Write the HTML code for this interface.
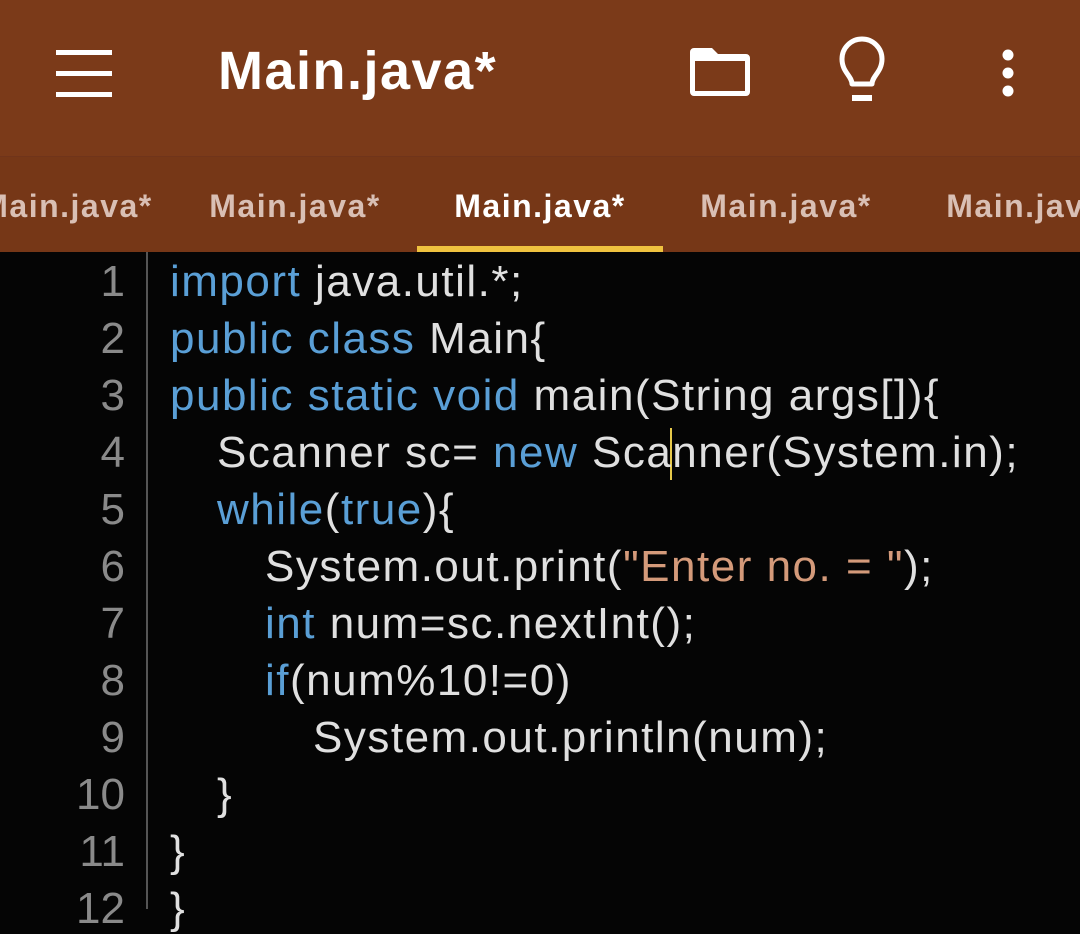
<!DOCTYPE html>
<html><head><meta charset="utf-8"><style>
html,body{margin:0;padding:0;width:1080px;height:909px;overflow:hidden;background:#050505;font-family:"Liberation Sans",sans-serif}
#hdr{position:absolute;left:0;top:0;width:1080px;height:156px;background:#7b3a19}
#tabs{position:absolute;left:0;top:156px;width:1080px;height:95px;background:#763717;border-top:1px solid #70341a}
.title{position:absolute;left:218px;top:40px;font-size:54px;color:#fff;font-weight:bold;letter-spacing:1.5px}
.tab{position:absolute;top:188px;width:246px;text-align:center;font-size:32px;color:#d9bfb4;font-weight:bold;letter-spacing:1.5px;white-space:nowrap}
.code{position:absolute;font-size:44px;color:#e0e0e0;letter-spacing:1.5px;white-space:pre}
.ln{position:absolute;right:955px;font-size:44px;color:#8a8a8a;text-align:right}
.k{color:#5a9fd6}.s{color:#d49a7a}
</style></head><body>
<div id="hdr"></div>
<div id="tabs"></div>
<svg style="position:absolute;left:0;top:0" width="1080" height="156">
<g fill="#fff"><rect x="56" y="50" width="56" height="5"/><rect x="56" y="71" width="56" height="5"/><rect x="56" y="92" width="56" height="5"/></g>
<path d="M690 52a4 4 0 0 1 4-4h18l6 6h28a4 4 0 0 1 4 4v34a4 4 0 0 1-4 4h-52a4 4 0 0 1-4-4z" fill="#fff"/>
<rect x="695" y="61" width="50" height="30" fill="#7b3a19"/>
<path d="M852 84c0-8-10-12-10-25a20 20 0 0 1 40 0c0 13-10 17-10 25z" fill="none" stroke="#fff" stroke-width="5" stroke-linejoin="round"/>
<rect x="852" y="95" width="20" height="6" fill="#fff"/>
<g fill="#fff"><circle cx="1008" cy="55" r="5.5"/><circle cx="1008" cy="73" r="5.5"/><circle cx="1008" cy="91" r="5.5"/></g>
</svg>
<div class="title">Main.java*</div>
<div class="tab" style="left:-56px">Main.java*</div>
<div class="tab" style="left:172px">Main.java*</div>
<div class="tab" style="left:417px;color:#fff">Main.java*</div>
<div class="tab" style="left:663px">Main.java*</div>
<div class="tab" style="left:909px">Main.java*</div>
<div style="position:absolute;left:417px;top:246px;width:246px;height:6px;background:#efc23f"></div>
<div style="position:absolute;left:146px;top:252px;width:2px;height:657px;background:#555"></div>
<div style="position:absolute;left:670px;top:428px;width:2px;height:52px;background:#e6c84a"></div>
<div class="ln" style="top:257px">1</div>
<div class="ln" style="top:314px">2</div>
<div class="ln" style="top:371px">3</div>
<div class="ln" style="top:428px">4</div>
<div class="ln" style="top:485px">5</div>
<div class="ln" style="top:542px">6</div>
<div class="ln" style="top:599px">7</div>
<div class="ln" style="top:656px">8</div>
<div class="ln" style="top:713px">9</div>
<div class="ln" style="top:770px">10</div>
<div class="ln" style="top:827px">11</div>
<div class="ln" style="top:884px">12</div>
<div class="code" style="left:170px;top:257px"><span class="k">import</span> java.util.*;</div>
<div class="code" style="left:170px;top:314px"><span class="k">public class</span> Main{</div>
<div class="code" style="left:170px;top:371px"><span class="k">public static void</span> main(String args[]){</div>
<div class="code" style="left:217px;top:428px">Scanner sc= <span class="k">new</span> Scanner(System.in);</div>
<div class="code" style="left:217px;top:485px"><span class="k">while</span>(<span class="k">true</span>){</div>
<div class="code" style="left:265px;top:542px">System.out.print(<span class="s">"Enter no. = "</span>);</div>
<div class="code" style="left:265px;top:599px"><span class="k">int</span> num=sc.nextInt();</div>
<div class="code" style="left:265px;top:656px"><span class="k">if</span>(num%10!=0)</div>
<div class="code" style="left:313px;top:713px">System.out.println(num);</div>
<div class="code" style="left:217px;top:770px">}</div>
<div class="code" style="left:170px;top:827px">}</div>
<div class="code" style="left:170px;top:884px">}</div>
</body></html>
